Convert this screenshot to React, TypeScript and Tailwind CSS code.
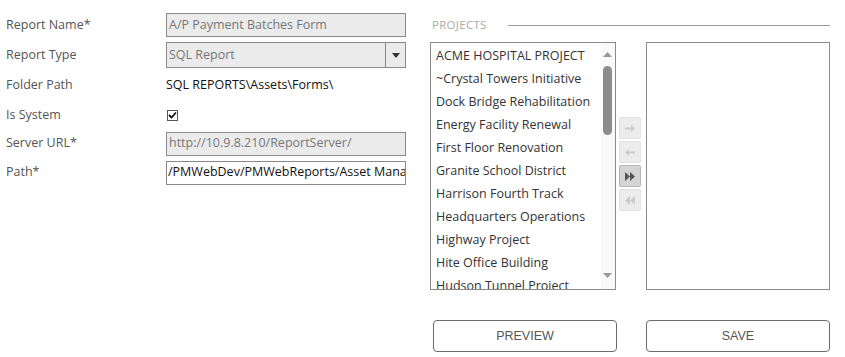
import React from "react";

const PROJECTS = [
  "ACME HOSPITAL PROJECT",
  "~Crystal Towers Initiative",
  "Dock Bridge Rehabilitation",
  "Energy Facility Renewal",
  "First Floor Renovation",
  "Granite School District",
  "Harrison Fourth Track",
  "Headquarters Operations",
  "Highway Project",
  "Hite Office Building",
  "Hudson Tunnel Project",
];

const font = { fontFamily: '"Open Sans", "Noto Sans", sans-serif' };

function Row({ label, h, children }: { label: string; h: string; children: React.ReactNode }) {
  return (
    <div className={`flex items-center ${h}`}>
      <div className="w-[160px] text-[12.5px] text-[#555]">{label}</div>
      <div className="w-[240px]">{children}</div>
    </div>
  );
}

function MoveButton({ active, children }: { active?: boolean; children: React.ReactNode }) {
  return (
    <div
      className={
        active
          ? "flex h-[22px] w-[22px] items-center justify-center rounded-[2px] border border-[#b5b5b5] bg-[#d4d4d4]"
          : "flex h-[22px] w-[22px] items-center justify-center rounded-[2px] border border-[#e2e2e2] bg-[#ececec]"
      }
    >
      {children}
    </div>
  );
}

export default function App() {
  return (
    <div className="flex h-[357px] w-[845px] bg-white" style={font}>
      {/* form fields */}
      <div className="w-[430px] pl-[6px] pt-[10px]">
        <Row label="Report Name*" h="h-[30px]">
          <div className="flex h-[24px] items-center border border-[#8a8a8a] bg-[#ebebeb] px-[2px] text-[12.5px] text-[#777]">
            A/P Payment Batches Form
          </div>
        </Row>
        <Row label="Report Type" h="h-[30px]">
          <div className="flex h-[26px] items-stretch border border-[#8a8a8a] bg-[#ebebeb] text-[12.5px] text-[#777]">
            <div className="flex flex-1 items-center px-[2px]">SQL Report</div>
            <div className="flex w-[20px] items-center justify-center border-l border-[#8a8a8a]">
              <svg width="8" height="5" viewBox="0 0 8 5">
                <path d="M0 0h8L4 5z" fill="#333" />
              </svg>
            </div>
          </div>
        </Row>
        <Row label="Folder Path" h="h-[31px]">
          <div className="text-[12.5px] text-[#111]">SQL REPORTS\Assets\Forms\</div>
        </Row>
        <Row label="Is System" h="h-[28px]">
          <div className="ml-[1px] flex h-[11px] w-[11px] items-center justify-center border border-[#555] bg-white">
            <svg width="9" height="8" viewBox="0 0 9 8">
              <path d="M1 4l2.5 2.5L8 1.5" stroke="#111" strokeWidth="1.8" fill="none" />
            </svg>
          </div>
        </Row>
        <Row label="Server URL*" h="h-[29px]">
          <div className="flex h-[24px] items-center border border-[#8a8a8a] bg-[#ebebeb] px-[2px] text-[12.5px] text-[#777]">
            http://10.9.8.210/ReportServer/
          </div>
        </Row>
        <Row label="Path*" h="h-[29px]">
          <div className="flex h-[24px] items-center overflow-hidden whitespace-nowrap border border-[#8a8a8a] bg-white px-[1px] text-[12.5px] text-[#111]">
            /PMWebDev/PMWebReports/Asset Management
          </div>
        </Row>
      </div>

      {/* projects picker */}
      <div className="w-[400px] pt-[17px]">
        <div className="flex h-[16px] items-center">
          <span className="pl-[2px] text-[11.5px] tracking-[0.3px] text-[#aaa]">PROJECTS</span>
          <div className="ml-[21px] h-px flex-1 bg-[#999]" />
        </div>

        <div className="mt-[9px] flex h-[248px]">
          <div className="relative flex w-[186px] overflow-hidden border border-[#8a8a8a]">
            <div className="flex-1 pl-[5px] pt-[2px]">
              {PROJECTS.map((p) => (
                <div key={p} className="flex h-[23px] items-center whitespace-nowrap text-[12.5px] text-[#333]">
                  {p}
                </div>
              ))}
            </div>
            <div className="relative w-[14px] bg-[#fafafa]">
              <svg className="absolute left-[2px] top-[9px]" width="9" height="5" viewBox="0 0 9 5">
                <path d="M0 5h9L4.5 0z" fill="#999" />
              </svg>
              <div className="absolute left-[2px] top-[23px] h-[69px] w-[9px] rounded-full bg-[#8c8c8c]" />
              <svg className="absolute bottom-[11px] left-[2px]" width="9" height="5" viewBox="0 0 9 5">
                <path d="M0 0h9L4.5 5z" fill="#999" />
              </svg>
            </div>
          </div>

          <div className="ml-[3px] mr-[5px] flex flex-col gap-[2px] pt-[75px]">
            <MoveButton>
              <svg width="10" height="9" viewBox="0 0 10 9">
                <path d="M0 3.5h6V1l4 3.5L6 8V5.5H0z" fill="#ccc" />
              </svg>
            </MoveButton>
            <MoveButton>
              <svg width="10" height="9" viewBox="0 0 10 9">
                <path d="M10 3.5H4V1L0 4.5 4 8V5.5h6z" fill="#ccc" />
              </svg>
            </MoveButton>
            <MoveButton active>
              <svg width="10" height="9" viewBox="0 0 10 9">
                <path d="M0 0l5 4.5L0 9zM5 0l5 4.5L5 9z" fill="#555" />
              </svg>
            </MoveButton>
            <MoveButton>
              <svg width="10" height="9" viewBox="0 0 10 9">
                <path d="M10 0L5 4.5 10 9zM5 0L0 4.5 5 9z" fill="#ccc" />
              </svg>
            </MoveButton>
          </div>

          <div className="w-[185px] border border-[#8a8a8a]" />
        </div>

        <div className="mt-[30px] flex" style={{ fontFamily: '"Liberation Sans", Arial, sans-serif' }}>
          <button className="ml-[3px] h-[32px] w-[184px] rounded-[4px] border border-[#6b6b6b] bg-white text-[12.5px] text-[#555]">
            PREVIEW
          </button>
          <button className="ml-[29px] h-[32px] w-[184px] rounded-[4px] border border-[#6b6b6b] bg-white text-[12.5px] text-[#555]">
            SAVE
          </button>
        </div>
      </div>
    </div>
  );
}
